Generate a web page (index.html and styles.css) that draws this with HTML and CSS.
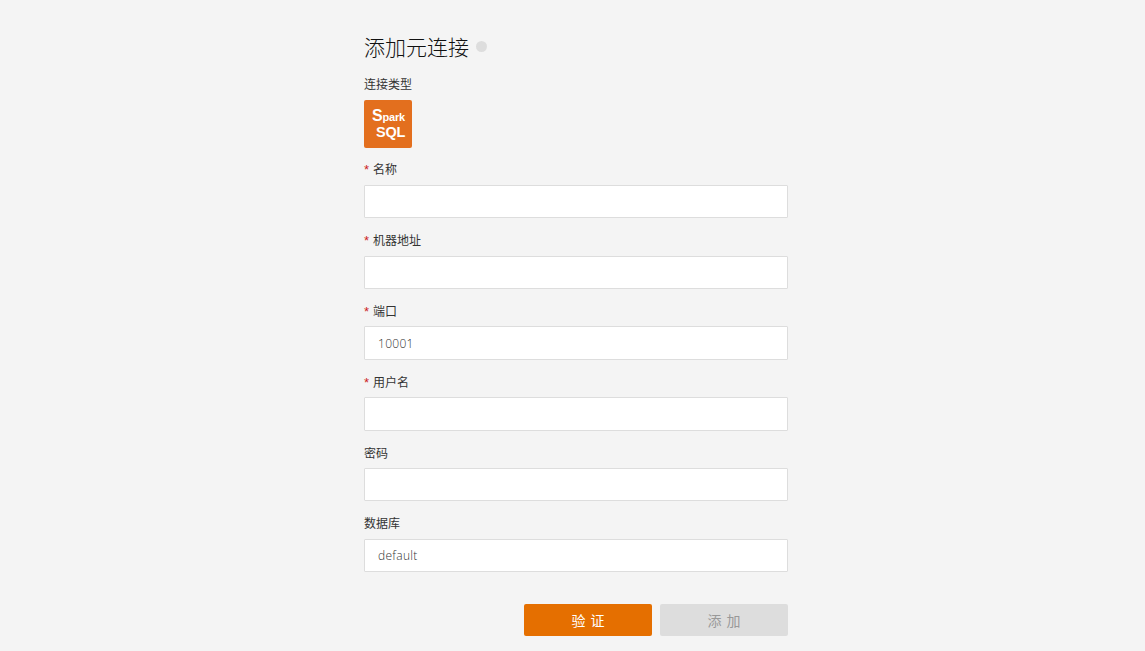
FILE: index.html
```html
<!DOCTYPE html>
<html lang="zh">
<head>
<meta charset="utf-8">
<title>添加元连接</title>
<link rel="stylesheet" href="styles.css">
</head>
<body>
<main class="page">
  <h1 class="title">添加元连接<span class="dot"></span></h1>
  <div class="type">
    <div class="label">连接类型</div>
    <div class="logo"><span class="logo-a"><b>S</b>park</span><span class="logo-b">SQL</span></div>
  </div>
  <form class="form">
    <div class="item"><div class="label"><i>*</i>名称</div><input class="input" type="text"></div>
    <div class="item"><div class="label"><i>*</i>机器地址</div><input class="input" type="text"></div>
    <div class="item"><div class="label"><i>*</i>端口</div><input class="input" type="text" value="10001"></div>
    <div class="item"><div class="label"><i>*</i>用户名</div><input class="input" type="text"></div>
    <div class="item"><div class="label">密码</div><input class="input" type="text"></div>
    <div class="item"><div class="label">数据库</div><input class="input" type="text" value="default"></div>
    <div class="actions">
      <button class="btn primary" type="button">验 证</button>
      <button class="btn disabled" type="button">添 加</button>
    </div>
  </form>
</main>
</body>
</html>
```

FILE: styles.css
```css
* { box-sizing: border-box; }
html, body { margin: 0; height: 100%; }
body {
  background: #f4f4f4;
  color: #333;
  font-family: Lato, "Noto Sans CJK SC", sans-serif;
  font-size: 12px;
  overflow: hidden;
}
.page { width: 424px; margin-left: 364px; padding-top: 30px; }
.title {
  margin: 0;
  height: 33px;
  font-size: 21px;
  font-weight: 300;
  line-height: 33px;
  color: #111;
  display: flex;
  align-items: center;
}
.dot {
  width: 11px;
  height: 11px;
  border-radius: 50%;
  background: #ddd;
  margin-left: 7px;
}
.type { margin-top: 13px; }
.label {
  height: 18px;
  line-height: 18px;
  font-size: 12px;
  color: #333;
}
.label i {
  color: #c22;
  font-style: normal;
  font-family: "Liberation Sans", sans-serif;
  font-size: 13px;
  margin-right: 4px;
}
.logo {
  margin-top: 6px;
  width: 48px;
  height: 48px;
  border-radius: 2px;
  background: #e36f1e;
  color: #fff;
  font-family: "Liberation Sans", sans-serif;
  font-weight: 700;
  display: flex;
  flex-direction: column;
  padding: 7px 0 0 8px;
}
.logo-a { font-size: 11px; line-height: 17px; letter-spacing: -0.2px; }
.logo-a b { font-size: 16px; }
.logo-b { font-size: 14.5px; line-height: 15px; margin: -1px 0 0 4px; letter-spacing: -0.2px; }
.form { margin-top: 13.4px; }
.item { height: 70.8px; }
.input {
  display: block;
  width: 100%;
  height: 33.4px;
  margin-top: 5.4px;
  padding: 0 13px;
  border: 1px solid #ddd;
  border-radius: 1px;
  background: #fff;
  color: #333;
  font-family: "Open Sans", "Noto Sans CJK SC", sans-serif;
  font-size: 12px;
  font-weight: 300;
  letter-spacing: 0.3px;
  outline: none;
}
.actions {
  display: flex;
  justify-content: flex-end;
  gap: 8px;
  margin-top: 17.8px;
}
.btn {
  width: 128px;
  height: 32px;
  border: 0;
  border-radius: 2px;
  font-family: Lato, "Noto Sans CJK SC", sans-serif;
  font-size: 14px;
  word-spacing: 1.5px;
}
.primary { background: #e56f00; color: #fff; }
.disabled { background: #ddd; color: #999; }
```
